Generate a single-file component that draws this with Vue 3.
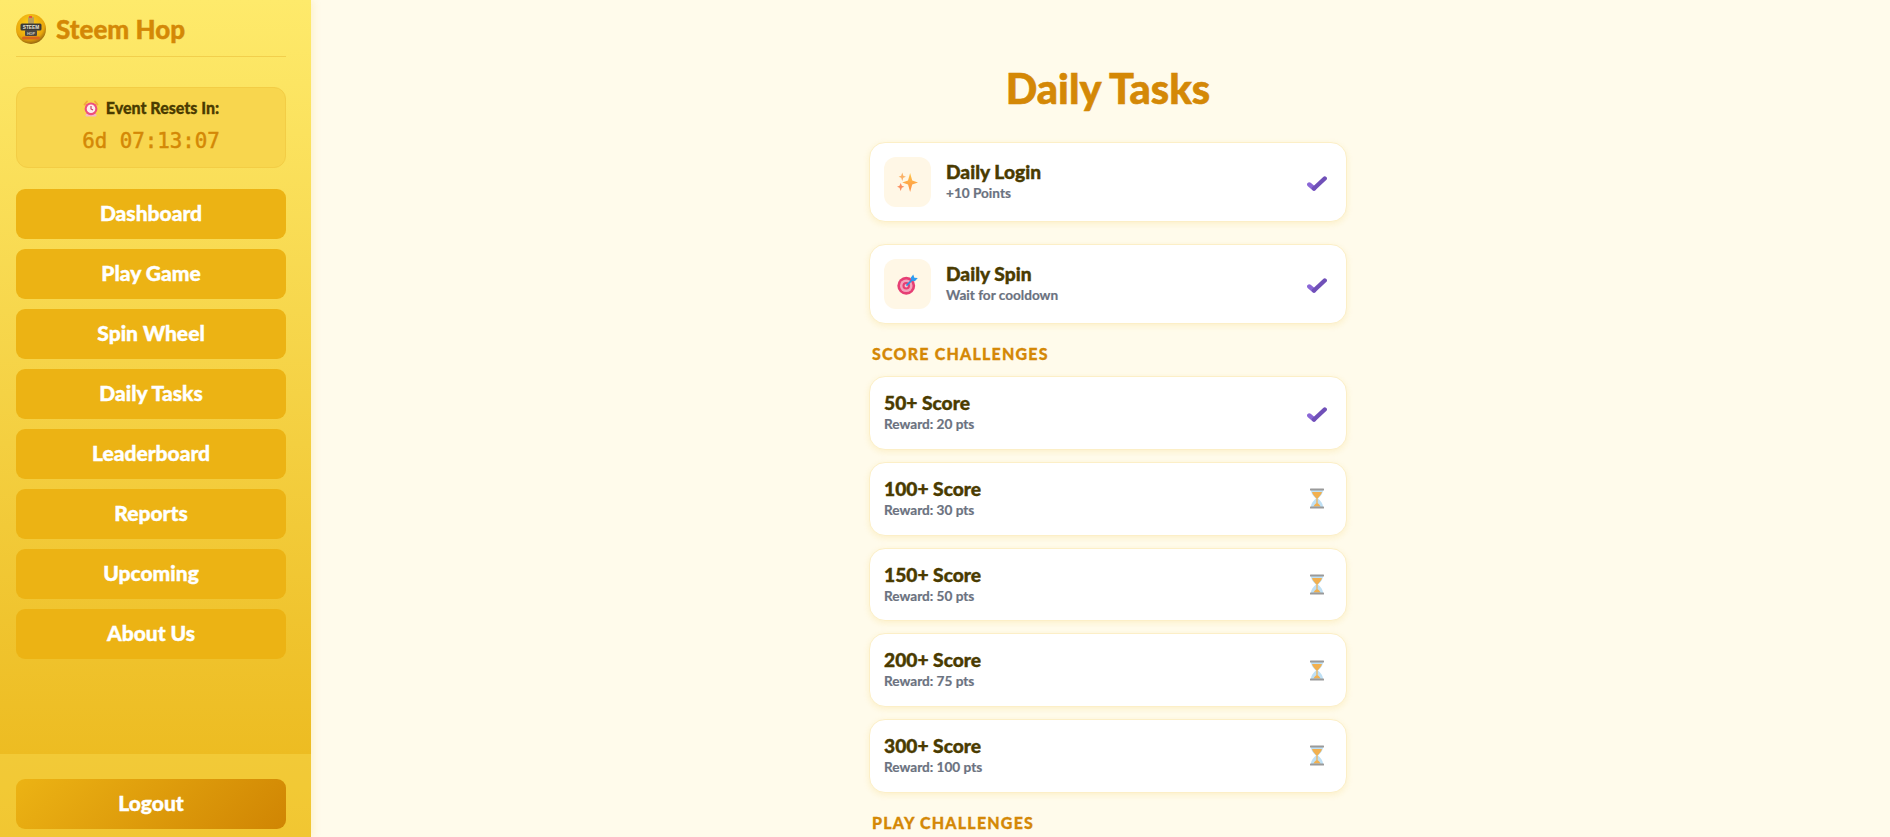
<template>
  <div class="layout">
    <aside class="sidebar">
      <div class="sidebar-top">
        <div class="brand">
          <svg class="logo" viewBox="0 0 30 30">
            <defs>
              <radialGradient id="logoBg" cx="0.45" cy="0.35" r="0.7">
                <stop offset="0" stop-color="#fdd31d" />
                <stop offset="0.7" stop-color="#e9a70c" />
                <stop offset="1" stop-color="#7d5210" />
              </radialGradient>
            </defs>
            <circle cx="15" cy="15" r="15" fill="url(#logoBg)" />
            <rect x="12" y="3" width="6" height="7" rx="1" fill="#b9a05c" />
            <rect x="13" y="2" width="3" height="2" fill="#e2563a" />
            <rect x="4.500" y="9.500" width="21" height="7" rx="1.500" fill="#3c3a36" />
            <rect x="9" y="16" width="12" height="6" rx="1" fill="#4a4640" />
            <text x="15" y="15" class="logo-big" text-anchor="middle">STEEM</text>
            <text x="15" y="20.500" class="logo-small" text-anchor="middle">HOP</text>
            <rect x="6" y="22.500" width="18" height="3" rx="1.500" fill="#d8661c" />
          </svg>
          <span class="brand-name">Steem Hop</span>
        </div>
        <div class="timer">
          <div class="timer-label">
            <svg class="clock" viewBox="0 0 16 17">
              <path d="M1.500 4.500 4 1.500M14.500 4.500 12 1.500" stroke="#f2a93b" stroke-width="1.800" stroke-linecap="round" />
              <rect x="2.500" y="14" width="11" height="2.600" rx="1" fill="#f5b8c8" />
              <circle cx="8" cy="8.800" r="6.400" fill="#ee4f7d" />
              <circle cx="8" cy="8.800" r="4.300" fill="#fdeef0" />
              <path d="M8 6v3l2 1" stroke="#c23a5c" stroke-width="1.100" fill="none" />
            </svg>
            <span>Event Resets In:</span>
          </div>
          <div class="timer-value">6d 07:13:07</div>
        </div>
        <nav class="nav">
          <a v-for="item in navItems" :key="item" class="nav-btn">{{ item }}</a>
        </nav>
      </div>
      <div class="sidebar-footer">
        <button class="logout">Logout</button>
      </div>
    </aside>

    <main class="main">
      <div class="content">
        <h1>Daily Tasks</h1>
        <div class="daily">
          <div v-for="task in dailyTasks" :key="task.title" class="card">
            <div class="card-left">
              <div class="icon-box">
                <svg v-if="task.icon === 'sparkles'" class="task-icon" viewBox="0 0 20 20">
                  <defs>
                    <linearGradient id="sparkle" x1="0" y1="0" x2="0" y2="1">
                      <stop offset="0" stop-color="#ffc64a" />
                      <stop offset="1" stop-color="#ff8f45" />
                    </linearGradient>
                  </defs>
                  <path d="M12.500 1 14.500 8 20 10 14.500 12 12.500 19 10.500 12 5 10 10.500 8Z" fill="url(#sparkle)" />
                  <path d="M5 0.500 6 3.500 8.500 4.500 6 5.500 5 8.500 4 5.500 1.500 4.500 4 3.500Z" fill="#fbb267" />
                  <path d="M3.500 10.500 4.600 13 7 14 4.600 15 3.500 18 2.400 15 0 14 2.400 13Z" fill="#fb8e5d" />
                </svg>
                <svg v-else class="task-icon" viewBox="0 0 20 20">
                  <circle cx="8.800" cy="11.200" r="8.500" fill="#e63f74" />
                  <circle cx="8.800" cy="11.200" r="6" fill="#f3a3bc" />
                  <circle cx="8.800" cy="11.200" r="3.600" fill="#e63f74" />
                  <circle cx="8.800" cy="11.200" r="1.600" fill="#f6c3d2" />
                  <path d="M9 11 16 4" stroke="#2b8fe0" stroke-width="1.600" />
                  <path d="M13 3.500 15.500 0.500 16.500 3.500 19.800 3.800 17 7 14 6.500Z" fill="#2f9cf0" />
                </svg>
              </div>
              <div class="info">
                <div class="title">{{ task.title }}</div>
                <div class="sub">{{ task.sub }}</div>
              </div>
            </div>
            <svg class="check" viewBox="0 0 20 15">
              <path d="M2.300 8.500 7 12.500" fill="none" stroke="#8a66d6" stroke-width="4.400" stroke-linecap="round" />
              <path d="M7 12.500 17.700 2.500" fill="none" stroke="#7050b8" stroke-width="4.400" stroke-linecap="round" />
            </svg>
          </div>
        </div>

        <h2>Score Challenges</h2>
        <div class="list">
          <div v-for="c in scoreChallenges" :key="c.title" class="card">
            <div class="info">
              <div class="title">{{ c.title }}</div>
              <div class="sub">{{ c.sub }}</div>
            </div>
            <svg v-if="c.done" class="check" viewBox="0 0 20 15">
              <path d="M2.300 8.500 7 12.500" fill="none" stroke="#8a66d6" stroke-width="4.400" stroke-linecap="round" />
              <path d="M7 12.500 17.700 2.500" fill="none" stroke="#7050b8" stroke-width="4.400" stroke-linecap="round" />
            </svg>
            <svg v-else class="hourglass" viewBox="0 0 16 21">
              <path d="M2 2h12c0 4-3 6.500-5 8.500 2 2 5 4.500 5 8.500H2c0-4 3-6.500 5-8.500C5 8.500 2 6 2 2Z" fill="#bfe0f5" />
              <path d="M3 4h10C12.500 7 9.500 9 8.700 10.500H7.300C6.500 9 3.500 7 3 4Z" fill="#f2b04f" />
              <path d="M7.400 10.500h1.200v5h-1.200Z" fill="#f2b04f" />
              <path d="M4.500 18.500c.5-1.500 2-3 3.500-3.500 1.500.5 3 2 3.500 3.500Z" fill="#f2b04f" />
              <rect x="1" y="0.500" width="14" height="2" rx="0.500" fill="#9a9a9a" />
              <rect x="1" y="18.500" width="14" height="2" rx="0.500" fill="#9a9a9a" />
            </svg>
          </div>
        </div>

        <h2>Play Challenges</h2>
      </div>
    </main>
  </div>
</template>

<script setup>
const navItems = ['Dashboard', 'Play Game', 'Spin Wheel', 'Daily Tasks', 'Leaderboard', 'Reports', 'Upcoming', 'About Us']

const dailyTasks = [
  { title: 'Daily Login', sub: '+10 Points', icon: 'sparkles' },
  { title: 'Daily Spin', sub: 'Wait for cooldown', icon: 'target' },
]

const scoreChallenges = [
  { title: '50+ Score', sub: 'Reward: 20 pts', done: true },
  { title: '100+ Score', sub: 'Reward: 30 pts', done: false },
  { title: '150+ Score', sub: 'Reward: 50 pts', done: false },
  { title: '200+ Score', sub: 'Reward: 75 pts', done: false },
  { title: '300+ Score', sub: 'Reward: 100 pts', done: false },
]
</script>

<style>
html, body {
  margin: 0;
  height: 100%;
  overflow: hidden;
}
</style>

<style scoped>
.layout {
  display: flex;
  height: 837px;
  overflow: hidden;
  background: #fffbeb;
  font-family: Lato, "Open Sans", sans-serif;
  font-weight: 900;
}

.sidebar {
  width: 311px;
  flex-shrink: 0;
  display: flex;
  flex-direction: column;
  justify-content: space-between;
  background: linear-gradient(180deg, #feea6b 0%, #ebb71a 100%);
  box-shadow: 2px 0 8px rgba(234, 179, 8, 0.15);
}

.sidebar-top {
  padding: 14px 25px 0 16px;
}

.brand {
  display: flex;
  align-items: center;
  gap: 10px;
  height: 30px;
  padding-bottom: 12px;
  border-bottom: 1px solid #f2cf4c;
}

.logo {
  width: 30px;
  height: 30px;
}

.logo-big {
  font-family: "Liberation Sans", sans-serif;
  font-size: 4.800px;
  font-weight: 700;
  fill: #e8e4d8;
}

.logo-small {
  font-family: "Liberation Sans", sans-serif;
  font-size: 3.800px;
  font-weight: 700;
  fill: #cfcabb;
}

.brand-name {
  font-size: 26px;
  color: #d48806;
  -webkit-text-stroke: 0.4px #d48806;
}

.timer {
  box-sizing: border-box;
  margin-top: 30px;
  height: 81px;
  padding-bottom: 3px;
  border: 1px solid #f3cd45;
  border-radius: 12px;
  background: #f8d64e;
  display: flex;
  flex-direction: column;
  align-items: center;
  justify-content: center;
  gap: 12px;
}

.timer-label {
  display: flex;
  align-items: center;
  gap: 7px;
  font-size: 16px;
  line-height: 18px;
  color: #4a3b00;
  -webkit-text-stroke: 0.3px #4a3b00;
}

.clock {
  width: 16px;
  height: 17px;
}

.timer-value {
  font-family: "DejaVu Sans Mono", monospace;
  font-size: 20.800px;
  line-height: 24px;
  font-weight: 400;
  color: #d48806;
  -webkit-text-stroke: 0.5px #d48806;
}

.nav {
  margin-top: 21px;
  display: flex;
  flex-direction: column;
  gap: 10px;
}

.nav-btn {
  box-sizing: border-box;
  height: 50px;
  padding-bottom: 4px;
  border-radius: 9px;
  background: #ecb314;
  color: #fff;
  font-size: 21px;
  -webkit-text-stroke: 0.4px #fff;
  display: flex;
  align-items: center;
  justify-content: center;
}

.sidebar-footer {
  padding: 25px 25px 8px 16px;
  background: rgba(255, 235, 107, 0.3);
}

.logout {
  display: block;
  width: 100%;
  height: 50px;
  padding: 0 0 4px;
  border: none;
  border-radius: 9px;
  background: linear-gradient(135deg, #ecb314, #d08503);
  color: #fff;
  font-family: inherit;
  font-weight: 900;
  font-size: 21px;
  -webkit-text-stroke: 0.4px #fff;
}

.main {
  flex: 1;
  min-width: 0;
  padding: 64px 0 0 15px;
}

.content {
  width: 478px;
  margin: 0 auto;
}

h1 {
  margin: 0 0 30px;
  font-size: 41.500px;
  line-height: 48px;
  font-weight: 900;
  text-align: center;
  color: #d48806;
  -webkit-text-stroke: 0.6px #d48806;
}

h2 {
  margin: 18px 0 10px 3px;
  font-size: 16px;
  line-height: 24px;
  font-weight: 900;
  letter-spacing: 1.200px;
  text-transform: uppercase;
  color: #d48806;
  -webkit-text-stroke: 0.3px #d48806;
}

.daily {
  display: flex;
  flex-direction: column;
  gap: 22px;
}

.list {
  display: flex;
  flex-direction: column;
  gap: 12px;
}

.card {
  display: flex;
  align-items: center;
  justify-content: space-between;
  padding: 14px 19px 14px 14px;
  border: 1px solid #fcefc7;
  border-radius: 16px;
  background: #fff;
  box-shadow: 0 2px 6px rgba(234, 179, 8, 0.14);
}

.list .card {
  padding-top: 13px;
  padding-bottom: 13px;
}

.card-left {
  display: flex;
  align-items: center;
  gap: 15px;
}

.icon-box {
  width: 47px;
  height: 50px;
  border-radius: 12px;
  background: #fff7e6;
  display: flex;
  align-items: center;
  justify-content: center;
}

.task-icon {
  width: 21px;
  height: 21px;
}

.title {
  font-size: 19.200px;
  line-height: 26px;
  color: #4a3b00;
  -webkit-text-stroke: 0.4px #4a3b00;
}

.sub {
  font-size: 13.600px;
  line-height: 17.750px;
  padding-bottom: 2px;
  font-weight: 700;
  color: #6b7280;
  -webkit-text-stroke: 0.2px #6b7280;
}

.check {
  width: 20px;
  height: 15px;
  margin-top: 3px;
}

.hourglass {
  width: 16px;
  height: 21px;
  margin-right: 2px;
}
</style>
